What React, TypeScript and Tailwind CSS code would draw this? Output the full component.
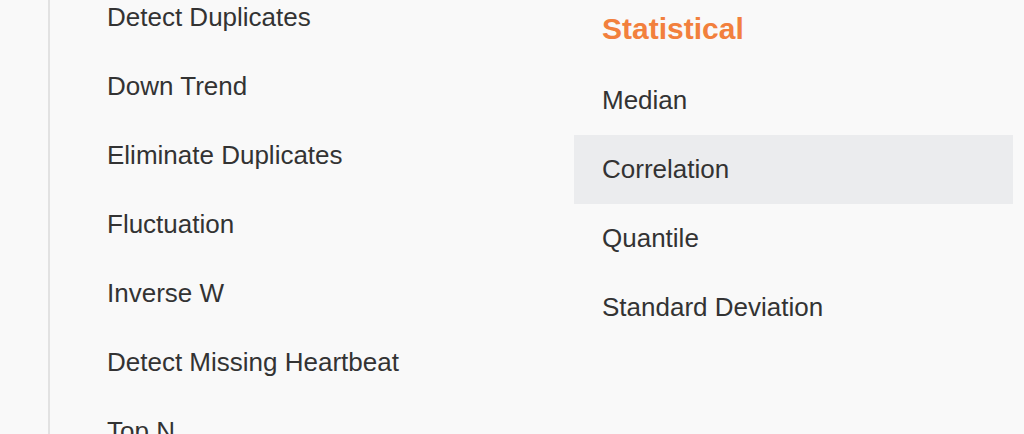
import React from "react";

const left = [
  "Detect Duplicates",
  "Down Trend",
  "Eliminate Duplicates",
  "Fluctuation",
  "Inverse W",
  "Detect Missing Heartbeat",
  "Top N",
];

const right = ["Median", "Correlation", "Quantile", "Standard Deviation"];

export default function App() {
  return (
    <div
      className="flex w-[1024px] h-[434px] overflow-hidden bg-[#f9f9f9] text-[#333333]"
      style={{ fontFamily: '"Liberation Sans", Arial, Helvetica, sans-serif' }}
    >
      <div className="w-[50px] shrink-0 border-r-2 border-[#e2e2e2]" />
      <div className="w-[524px] shrink-0 flex flex-col mt-[-17px]">
        {left.map((t) => (
          <div key={t} className="h-[69px] shrink-0 flex items-center pl-[57px] text-[26px]">
            {t}
          </div>
        ))}
      </div>
      <div className="w-[439px] shrink-0 flex flex-col">
        <div className="h-[66px] shrink-0 flex items-start pt-[6px] pl-[28px] text-[30px] font-bold text-[#f2803d]">
          Statistical
        </div>
        {right.map((t) => (
          <div
            key={t}
            className={
              "h-[69px] shrink-0 flex items-center pl-[28px] text-[26px] " +
              (t === "Correlation" ? "bg-[#ebecee]" : "")
            }
          >
            {t}
          </div>
        ))}
      </div>
    </div>
  );
}
